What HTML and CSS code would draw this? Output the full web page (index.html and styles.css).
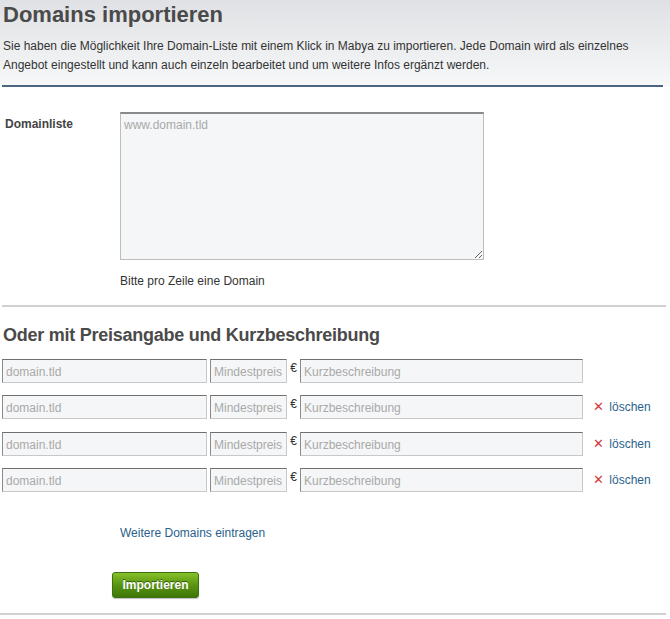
FILE: index.html
```html
<!DOCTYPE html>
<html lang="de">
<head>
  <meta charset="UTF-8">
  <title>Domains importieren</title>
  <link rel="stylesheet" href="styles.css">
</head>
<body>

  <div class="intro">
    <h1>Domains importieren</h1>
    <p>Sie haben die Möglichkeit Ihre Domain-Liste mit einem Klick in Mabya zu importieren. Jede Domain wird als einzelnes Angebot eingestellt und kann auch einzeln bearbeitet und um weitere Infos ergänzt werden.</p>
  </div>

  <div class="list-block">
    <label class="field-label" for="domainList">Domainliste</label>
    <div>
      <textarea id="domainList" placeholder="www.domain.tld"></textarea>
      <div class="hint">Bitte pro Zeile eine Domain</div>
    </div>
  </div>

  <div class="price-block">
    <h2>Oder mit Preisangabe und Kurzbeschreibung</h2>

    <div class="domain-row">
      <input class="in-domain" type="text" placeholder="domain.tld">
      <input class="in-price" type="text" placeholder="Mindestpreis">
      <span class="euro">€</span>
      <input class="in-desc" type="text" placeholder="Kurzbeschreibung">
    </div>
    <div class="domain-row">
      <input class="in-domain" type="text" placeholder="domain.tld">
      <input class="in-price" type="text" placeholder="Mindestpreis">
      <span class="euro">€</span>
      <input class="in-desc" type="text" placeholder="Kurzbeschreibung">
      <a class="remove" href="#"><span class="x">✕</span> löschen</a>
    </div>
    <div class="domain-row">
      <input class="in-domain" type="text" placeholder="domain.tld">
      <input class="in-price" type="text" placeholder="Mindestpreis">
      <span class="euro">€</span>
      <input class="in-desc" type="text" placeholder="Kurzbeschreibung">
      <a class="remove" href="#"><span class="x">✕</span> löschen</a>
    </div>
    <div class="domain-row">
      <input class="in-domain" type="text" placeholder="domain.tld">
      <input class="in-price" type="text" placeholder="Mindestpreis">
      <span class="euro">€</span>
      <input class="in-desc" type="text" placeholder="Kurzbeschreibung">
      <a class="remove" href="#"><span class="x">✕</span> löschen</a>
    </div>

    <div class="more">
      <a href="#">Weitere Domains eintragen</a>
    </div>

    <div class="actions">
      <button type="button" class="btn-import">Importieren</button>
    </div>
  </div>

</body>
</html>
```

FILE: styles.css
```css
body {
  margin: 0;
  font-family: "Liberation Sans", Arial, sans-serif;
  font-size: 12px;
  color: #333;
  background: #fff;
}

a {
  color: #2b5f8c;
  text-decoration: none;
}

.intro {
  background: linear-gradient(to bottom, #dfe1e4, #ffffff 115px);
  padding: 2px 3px 0 3px;
}

.intro h1 {
  margin: 0;
  font-size: 22px;
  color: #4a4a4a;
}

.intro p {
  margin: 9px 4px 0 -1px;
  line-height: 19px;
  padding: 0 0 10px 1px;
  border-bottom: 2px solid #4d6580;
}

.list-block {
  display: flex;
  padding: 25px 0 17px 3px;
  margin: 0 4px 0 2px;
  border-bottom: 2px solid #d0d0d0;
}

.field-label {
  width: 115px;
  font-weight: bold;
  color: #444;
  padding-top: 5px;
}

textarea {
  display: block;
  width: 364px;
  height: 148px;
  box-sizing: border-box;
  border: 1px solid #bdbdbd;
  border-top: 2px solid #8a8a8a;
  background: #f5f6f8;
  font-family: "Liberation Sans", Arial, sans-serif;
  font-size: 12px;
  padding: 4px 3px;
  resize: vertical;
}

textarea::placeholder,
input::placeholder {
  color: #a9a9a9;
}

.hint {
  margin-top: 14px;
  color: #333;
}

.price-block {
  padding: 0 0 15px 2px;
  margin-right: 4px;
  border-bottom: 2px solid #d0d0d0;
}

.price-block h2 {
  margin: 18px 0 13px 1px;
  font-size: 18px;
  color: #4a4a4a;
  letter-spacing: -0.25px;
}

.domain-row {
  display: flex;
  align-items: flex-start;
  height: 24px;
  margin-bottom: 12.33px;
}

.domain-row input {
  box-sizing: border-box;
  height: 24px;
  border: 1px solid #c8c8c8;
  border-top-color: #6f6f6f;
  border-left-color: #8a8a8a;
  background: #f5f6f7;
  font-family: "Liberation Sans", Arial, sans-serif;
  font-size: 12px;
  padding: 2px 3px 0 3px;
  margin: 0;
}

.in-domain {
  width: 205px;
}

.in-price {
  width: 77px;
  margin-left: 3px !important;
}

.euro {
  width: 13px;
  text-align: center;
  font-size: 12px;
  line-height: 18px;
  color: #333;
}

.in-desc {
  width: 283px;
}

.remove {
  margin-left: 10px;
  padding-top: 4px;
  font-size: 12px;
}

.remove .x {
  color: #d2393c;
  font-size: 13px;
  margin-right: 2px;
}

.more {
  padding: 22px 0 0 118px;
}

.actions {
  padding: 32px 0 0 110px;
}

.btn-import {
  width: 87px;
  height: 26px;
  border: 1px solid #3d7010;
  border-radius: 3px;
  background: linear-gradient(to bottom, #86c12a, #5a9412 50%, #3e7606);
  color: #fff;
  font-family: "Liberation Sans", Arial, sans-serif;
  font-weight: bold;
  font-size: 12px;
  text-shadow: 0 -1px 0 #2e5a06;
  box-shadow: 0 1px 1px rgba(0, 0, 0, 0.25);
  padding: 0;
}
```
